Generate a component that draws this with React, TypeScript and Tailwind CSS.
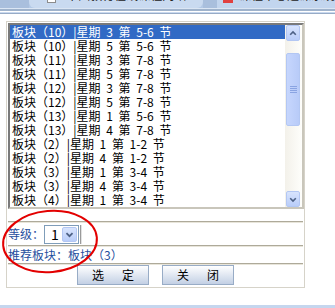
const rows = [
  "板块（10）|星期 3 第 5-6 节",
  "板块（10）|星期 5 第 5-6 节",
  "板块（11）|星期 3 第 7-8 节",
  "板块（11）|星期 5 第 7-8 节",
  "板块（12）|星期 3 第 7-8 节",
  "板块（12）|星期 5 第 7-8 节",
  "板块（13）|星期 1 第 5-6 节",
  "板块（13）|星期 4 第 7-8 节",
  "板块（2）|星期 1 第 1-2 节",
  "板块（2）|星期 4 第 1-2 节",
  "板块（3）|星期 1 第 3-4 节",
  "板块（3）|星期 4 第 3-4 节",
  "板块（4）|星期 1 第 3-4 节",
];

function Chevron({ up }: { up?: boolean }) {
  return (
    <svg width="15" height="15" viewBox="0 0 15 15">
      <polyline
        points={up ? "4,9 7.5,5.5 11,9" : "4,6 7.5,9.5 11,6"}
        fill="none"
        stroke="#4d6185"
        strokeWidth="2"
      />
    </svg>
  );
}

function Divider() {
  return <div className="h-[2px] border-t border-[#aeaa9a] bg-[#e8e5da]" />;
}

export default function App() {
  return (
    <div
      className="relative w-[335px] h-[308px] overflow-hidden bg-white text-[12px] leading-[14px]"
      style={{ fontFamily: '"Noto Sans CJK SC", "Noto Sans", sans-serif' }}
    >
      {/* browser tab strip */}
      <div className="flex h-[8px] overflow-hidden bg-[#b3c9e6]">
        <div className="w-[30px] bg-[#a9bfdd]" />
        <div className="flex w-[178px] items-start gap-[10px] rounded-b-[6px] bg-[#c9daf0] pl-[18px]">
          <div className="h-[3px] w-[9px] border border-t-0 border-[#8c8c8c] bg-white" />
          <div className="-mt-[12px] whitespace-nowrap text-[12px] text-[#222]">中国教育在线课程网站</div>
        </div>
        <div className="w-[14px] bg-[#a9bfdd]" />
        <div className="flex flex-1 items-start gap-[6px] bg-[#c2d5ee] pl-[6px]">
          <div className="h-[3px] w-[10px] bg-[#e04040]" />
          <div className="-mt-[12px] whitespace-nowrap text-[12px] text-[#222]">课程中心选课系统</div>
        </div>
      </div>
      <div className="h-[1px] bg-[#dbe6f4]" />
      <div className="h-[2px] bg-[#9fb3cc]" />
      <div className="h-[1px] bg-white" />
      <div className="h-[1px] bg-[#c9d9ef]" />
      <div className="h-[1px] bg-[#97abc6]" />

      <div className="pl-[6px] pt-[7px]">
        <div className="w-[299px] border border-[#d6d3c9] p-[1px]">
          {/* list box */}
          <div className="flex h-[186px] w-[296px] border-2 border-t-[#7a7a7a] border-l-[#7a7a7a] border-b-[#c9c6bb] border-r-[#c9c6bb]">
            <div className="flex-1 overflow-hidden">
              {rows.map((r, i) => (
                <div
                  key={i}
                  className={
                    "h-[14px] whitespace-nowrap pl-[2px] [word-spacing:3px] " +
                    (i === 0 ? "bg-[#316ac5] text-white" : "text-black")
                  }
                >
                  {r}
                </div>
              ))}
            </div>
            <div className="flex w-[17px] flex-col bg-gradient-to-r from-[#f3f1ea] to-[#fefefb] px-[1px] pr-[2px]">
              <div className="flex h-[16px] items-center justify-center rounded-[2px] border border-[#b3c7f3] bg-gradient-to-b from-[#d8e4fd] to-[#b9cdf9]">
                <Chevron up />
              </div>
              <div className="h-[12px]" />
              <div className="flex h-[73px] flex-col items-center justify-center gap-[1px] rounded-[2px] border border-[#b3c7f3] bg-gradient-to-r from-[#c6d6fd] to-[#b8cbf8]">
                <div className="h-[1px] w-[7px] bg-[#8aa4e2]" />
                <div className="h-[1px] w-[7px] bg-[#8aa4e2]" />
                <div className="h-[1px] w-[7px] bg-[#8aa4e2]" />
                <div className="h-[1px] w-[7px] bg-[#8aa4e2]" />
              </div>
              <div className="flex-1" />
              <div className="flex h-[16px] items-center justify-center rounded-[2px] border border-[#b3c7f3] bg-gradient-to-b from-[#d8e4fd] to-[#b9cdf9]">
                <Chevron />
              </div>
            </div>
          </div>

          <div className="h-[12px]" />
          <Divider />
          <div className="flex h-[22px] items-center text-[#1f4f9e]">
            <span>等级：</span>
            <div className="flex h-[19px] w-[35px] items-center border border-[#7f9db9] bg-white pl-[6px] pr-[1px]">
              <span className="flex-1 text-[14px] text-black">1</span>
              <div className="flex h-[15px] w-[15px] items-center justify-center rounded-[2px] border border-[#b3c7f3] bg-gradient-to-b from-[#d8e4fd] to-[#b9cdf9]">
                <Chevron />
              </div>
            </div>
            <div className="ml-[1px] h-[19px] w-[2px] border-l border-[#9a9a9a] bg-[#e2e2e2]" />
          </div>
          <Divider />
          <div className="flex h-[16px] items-center text-[#1f4f9e]">推荐板块：板块（3）</div>
          <Divider />
          <div className="flex h-[21px] items-start gap-[13px] pl-[69px]">
            <button className="flex h-[20px] w-[72px] items-center justify-center gap-[18px] border border-[#98acc6] bg-gradient-to-b from-white to-[#c3d0e4] text-black">
              <span>选</span>
              <span>定</span>
            </button>
            <button className="flex h-[20px] w-[72px] items-center justify-center gap-[18px] border border-[#98acc6] bg-gradient-to-b from-white to-[#c3d0e4] text-black">
              <span>关</span>
              <span>闭</span>
            </button>
          </div>
        </div>
      </div>

      <div className="absolute bottom-0 left-0 h-[3px] w-full bg-[#c5d6ee]" />

      {/* red annotation */}
      <svg className="absolute left-0 top-0" width="335" height="308">
        <ellipse
          cx="50"
          cy="241.5"
          rx="47"
          ry="30.5"
          transform="rotate(-5 50 241.5)"
          fill="none"
          stroke="#e30000"
          strokeWidth="2"
        />
      </svg>
    </div>
  );
}
